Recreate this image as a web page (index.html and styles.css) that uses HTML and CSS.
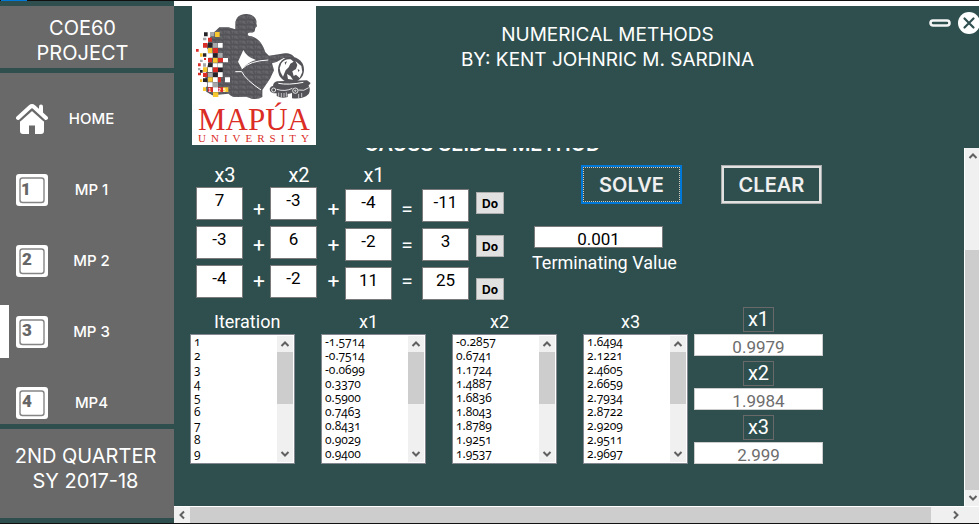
FILE: index.html
```html
<!DOCTYPE html>
<html lang="en">
<head>
<meta charset="utf-8">
<title>Numerical Methods</title>
<link rel="stylesheet" href="styles.css">
</head>
<body>
<div class="topline"><span class="topline-mark"></span></div>
<div class="app">
  <aside class="sidebar">
    <h1 class="panel brand">COE60<br>PROJECT</h1>
    <nav class="panel menu">
      <a class="item" href="#home">
        <svg class="icon" viewBox="0 0 32 32"><path d="M4 18 16 6.500 28 18V28a3 3 0 0 1-3 3H19V22.500H13V31H7a3 3 0 0 1-3-3Z" fill="#fff"/><path d="M2 16 16 3.500 30 16" fill="none" stroke="#696969" stroke-width="7"/><path d="M2 15 14 4Q16 2.300 18 4L30 15" fill="none" stroke="#fff" stroke-width="4" stroke-linecap="round"/><path d="M23 3.500a1.500 1.500 0 0 1 4 0V11L23 8Z" fill="#fff"/></svg>
        <span class="item-text">HOME</span>
      </a>
      <a class="item" href="#mp1">
        <svg class="icon" viewBox="0 0 32 32"><rect width="32" height="32" rx="3" fill="#fff"/><rect x="4" y="4" width="24" height="24.500" rx="2.500" fill="none" stroke="#858585" stroke-width="1.400"/><text class="key" x="10" y="21">1</text></svg>
        <span class="item-text">MP 1</span>
      </a>
      <a class="item" href="#mp2">
        <svg class="icon" viewBox="0 0 32 32"><rect width="32" height="32" rx="3" fill="#fff"/><rect x="4" y="4" width="24" height="24.500" rx="2.500" fill="none" stroke="#858585" stroke-width="1.400"/><text class="key" x="11" y="20">2</text></svg>
        <span class="item-text">MP 2</span>
      </a>
      <a class="item active" href="#mp3">
        <svg class="icon" viewBox="0 0 32 32"><rect width="32" height="32" rx="3" fill="#fff"/><rect x="4" y="4" width="24" height="24.500" rx="2.500" fill="none" stroke="#858585" stroke-width="1.400"/><text class="key" x="11" y="20">3</text></svg>
        <span class="item-text">MP 3</span>
      </a>
      <a class="item" href="#mp4">
        <svg class="icon" viewBox="0 0 32 32"><rect width="32" height="32" rx="3" fill="#fff"/><rect x="4" y="4" width="24" height="24.500" rx="2.500" fill="none" stroke="#858585" stroke-width="1.400"/><text class="key" x="11" y="20">4</text></svg>
        <span class="item-text">MP4</span>
      </a>
    </nav>
    <p class="panel term">2ND QUARTER<br>SY 2017-18</p>
  </aside>

  <main class="main">
    <header class="header">
      <svg class="logo" viewBox="21 18 372 417" role="img" aria-label="Mapúa University">
        <defs>
          <pattern id="glyphs" width="23" height="15" patternUnits="userSpaceOnUse"><path d="M1 3H8M4 3V11M11 11V3H16V11M19 3V11H22M12 7H15" stroke="#77777c" stroke-width="1.500" fill="none"/></pattern>
          <path id="body" d="M151 72C151 51 166 41 185 42C205 43 217 56 214 70L216 79L211 83L209 94C204 100 196 96 190 99C187 102 188 106 193 108C216 111 232 128 241 157L252 167L300 160C315 160 326 166 328 173L320 178L296 174L276 185L261 190L267 211L255 236L232 270V291Q219 299 200 296L184 290L156 291Q140 292 131 281L82 286L64 275L61 228L72 180L65 137L78 106L103 82L130 82L151 88Z"/>
        </defs>
        <rect x="21" y="18" width="372" height="417" fill="#fff"/>
        <use href="#body" fill="#535358"/>
        <use href="#body" fill="url(#glyphs)"/>
        <path d="M175 150Q185 172 214 180Q190 186 171 207L159 185Z" fill="#fff"/>
        <path d="M151 215H170Q183 240 228 270M170 207Q195 182 250 180" fill="none" stroke="#fff" stroke-width="3"/>
        <path d="M21 75H76V108H51V290H21Z" fill="#fff"/>
        <g fill="#db2c25"><path d="M69 113h12v12H69zM54 129h13v14H54zM84 144h15v15H84zM33 147h8v8h-8zM69 174h12v13H69zM99 174h15v13H99zM39 190h8v9h-8zM84 202h15v15H84zM54 218h13v13H54zM39 218h9v8h-9zM69 262h15v14H69zM99 232h9v15H99zM99 262h15v14H99zM57 174h6v6h-6z"/></g>
        <g fill="#f6c72f"><path d="M90 96h14v15H90zM69 144h13v15H69zM54 202h13v14H54zM84 174h14v14H84zM45 160h8v10h-8zM69 232h14v13H69zM84 277h16v14H84zM54 262h9v11h-9zM114 262h16v14H114zM45 238h7v8h-7z"/></g>
        <g fill="#a7a8aa"><path d="M75 96h13v13H75zM84 129h14v14H84zM54 113h10v8H54zM54 190h9v10H54zM99 159h14v14H99zM69 218h14v13H69zM45 179h8v7h-8zM84 247h15v14H84zM39 204h7v7h-7z"/></g>
        <g fill="#fff"><path d="M69 160h14v13H69zM99 129h14v14H99zM84 190h14v12H84zM114 174h15v13h-15zM54 146h14v13H54zM69 202h13v14H69zM99 190h14v12H99zM84 232h14v14H84zM120 232h15v15h-15zM69 247h14v14H69zM54 247h13v13H54zM99 217h14v14H99zM84 262h15v14H84z"/></g>
        <g fill="#262328"><path d="M57 97h11v12H57zM69 129h12v13H69zM54 160h10v10H54zM84 160h13v12H84zM69 190h12v11H69zM99 204h14v12H99zM45 210h8v8h-8zM84 218h14v13H84zM54 235h12v11H54z"/></g>
        <text class="year" x="100" y="275">1925</text>
        <circle cx="318" cy="209" r="39" fill="#535358"/>
        <path d="M289 190Q300 175 317 178L326 185L316 191L311 202L302 211L294 230Q284 217 284 205ZM331 183L349 198L352 216L344 234L333 224L326 228L322 214L333 207L337 195ZM306 222L316 228L324 239L309 237Z" fill="#fff"/>
        <path d="M299 187L306 184L301 195ZM338 207L344 211L340 216Z" fill="#535358"/>
        <path d="M276 244L366 241L377 249L370 258H264Q264 248 276 244Z" fill="#535358"/>
        <path d="M280 250Q310 256 355 247" fill="none" stroke="#fff" stroke-width="3"/>
        <path d="M263 258H371Q378 267 371 282L363 289Q347 298 321 295V279Q308 285 276 280Q253 280 254 266Q257 259 263 258Z" fill="#535358"/>
        <path d="M275 275V288Q290 297 308 291V277Z" fill="#535358"/>
        <path d="M281 278V290M289 279V292M297 279V291M304 277V290M341 282V294M350 279V292" stroke="#fff" stroke-width="2"/>
        <g fill="none" stroke="#fff" stroke-width="2.500"><circle cx="266" cy="270" r="6"/><circle cx="331" cy="272" r="8"/><circle cx="331" cy="272" r="2"/><path d="M275 268Q301 276 322 265M340 270Q357 275 371 263"/></g>
        <text class="logo-name" x="207" y="391">MAPÚA</text>
        <text class="logo-sub" x="213" y="426">UNIVERSITY</text>
      </svg>
      <h2 class="title">NUMERICAL METHODS<br>BY: KENT JOHNRIC M. SARDINA</h2>
      <div class="window-buttons">
        <button class="window-button" type="button" aria-label="Minimize"><svg viewBox="0 0 22 22"><rect x="1.500" y="8.500" width="19" height="5" rx="2.500" fill="none" stroke="#f4f4f4" stroke-width="2.600"/></svg></button>
        <button class="window-button" type="button" aria-label="Close"><svg viewBox="0 0 22 22"><circle cx="11" cy="11" r="11" fill="#fff"/><path d="M6.500 6.500 15.500 15.500M15.500 6.500 6.500 15.500" stroke="#2f4f4f" stroke-width="2.200" stroke-linecap="round"/></svg></button>
      </div>
    </header>

    <div class="viewport">
      <section class="content">
        <h3 class="method">GAUSS SEIDEL METHOD</h3>
        <div class="top-row">
          <div class="equations">
            <div class="terms"><span class="var">x3</span><input aria-label="x3, row 1" value="7"><input aria-label="x3, row 2" value="-3"><input aria-label="x3, row 3" value="-4"></div>
            <div class="ops"><span>+</span><span>+</span><span>+</span></div>
            <div class="terms"><span class="var">x2</span><input aria-label="x2, row 1" value="-3"><input aria-label="x2, row 2" value="6"><input aria-label="x2, row 3" value="-2"></div>
            <div class="ops second"><span>+</span><span>+</span><span>+</span></div>
            <div class="terms low"><span class="var">x1</span><input aria-label="x1, row 1" value="-4"><input aria-label="x1, row 2" value="-2"><input aria-label="x1, row 3" value="11"></div>
            <div class="ops equals"><span>=</span><span>=</span><span>=</span></div>
            <div class="terms low"><span class="var"></span><input aria-label="Result, row 1" value="-11"><input aria-label="Result, row 2" value="3"><input aria-label="Result, row 3" value="25"></div>
            <div class="dos"><button type="button">Do</button><button type="button">Do</button><button type="button">Do</button></div>
          </div>
          <div class="controls">
            <div class="actions"><button class="action solve" type="button">SOLVE</button><button class="action" type="button">CLEAR</button></div>
            <input class="field" id="terminating" value="0.001">
            <label class="caption" for="terminating">Terminating Value</label>
          </div>
        </div>

        <div class="bottom-row">
          <div class="series">
            <label class="caption wide" for="iteration">Iteration</label>
            <div class="listbox"><select id="iteration" size="9"><option>1</option><option>2</option><option>3</option><option>4</option><option>5</option><option>6</option><option>7</option><option>8</option><option>9</option></select>
              <div class="bar"><svg viewBox="0 0 16 16"><path d="M4.500 10 8 6.500 11.500 10"/></svg><i></i><svg viewBox="0 0 16 16"><path d="M4.500 6 8 9.500 11.500 6"/></svg></div></div>
          </div>
          <div class="series">
            <label class="caption" for="s1">x1</label>
            <div class="listbox"><select id="s1" size="9"><option>-1.5714</option><option>-0.7514</option><option>-0.0699</option><option>0.3370</option><option>0.5900</option><option>0.7463</option><option>0.8431</option><option>0.9029</option><option>0.9400</option></select>
              <div class="bar"><svg viewBox="0 0 16 16"><path d="M4.500 10 8 6.500 11.500 10"/></svg><i></i><svg viewBox="0 0 16 16"><path d="M4.500 6 8 9.500 11.500 6"/></svg></div></div>
          </div>
          <div class="series">
            <label class="caption" for="s2">x2</label>
            <div class="listbox"><select id="s2" size="9"><option>-0.2857</option><option>0.6741</option><option>1.1724</option><option>1.4887</option><option>1.6836</option><option>1.8043</option><option>1.8789</option><option>1.9251</option><option>1.9537</option></select>
              <div class="bar"><svg viewBox="0 0 16 16"><path d="M4.500 10 8 6.500 11.500 10"/></svg><i></i><svg viewBox="0 0 16 16"><path d="M4.500 6 8 9.500 11.500 6"/></svg></div></div>
          </div>
          <div class="series">
            <label class="caption" for="s3">x3</label>
            <div class="listbox"><select id="s3" size="9"><option>1.6494</option><option>2.1221</option><option>2.4605</option><option>2.6659</option><option>2.7934</option><option>2.8722</option><option>2.9209</option><option>2.9511</option><option>2.9697</option></select>
              <div class="bar"><svg viewBox="0 0 16 16"><path d="M4.500 10 8 6.500 11.500 10"/></svg><i></i><svg viewBox="0 0 16 16"><path d="M4.500 6 8 9.500 11.500 6"/></svg></div></div>
          </div>
          <div class="results">
            <div class="result"><label class="tag" for="r1">x1</label><input class="field" id="r1" value="0.9979" disabled></div>
            <div class="result"><label class="tag" for="r2">x2</label><input class="field" id="r2" value="1.9984" disabled></div>
            <div class="result"><label class="tag" for="r3">x3</label><input class="field" id="r3" value="2.999" disabled></div>
          </div>
        </div>
      </section>
      <div class="scroll-y"><svg viewBox="0 0 16 16"><path d="M4.500 10 8 6.500 11.500 10"/></svg><i></i><svg viewBox="0 0 16 16"><path d="M4.500 6 8 9.500 11.500 6"/></svg></div>
      <div class="scroll-x"><svg viewBox="0 0 16 16"><path d="M10 4.500 6.500 8 10 11.500"/></svg><i></i><svg viewBox="0 0 16 16"><path d="M6 4.500 9.500 8 6 11.500"/></svg></div>
    </div>
  </main>
</div>
</body>
</html>
```
FILE: styles.css
```css
* { box-sizing: border-box; }

body {
  margin: 0;
  height: 100vh;
  display: flex;
  flex-direction: column;
  overflow: hidden;
  background: #2f4f4f;
  border-bottom: 1px solid #111;
  color: #fff;
  font-family: Inter, "Liberation Sans", sans-serif;
}

h1, h2, h3, p { margin: 0; font-weight: 400; }
button, input, select { margin: 0; font-family: inherit; border-radius: 0; }

.topline { flex: none; height: 1px; background: #111; }
.topline-mark { display: block; width: 26px; height: 1px; margin-left: 1px; background: #0078d7; }

.app { flex: 1; min-height: 0; display: grid; grid-template-columns: 174px minmax(0, 1fr); }

/* Sidebar */
.sidebar { display: flex; flex-direction: column; gap: 5px; padding: 5px 0; min-height: 0; }
.panel { background: #696969; }
.brand, .term { flex: none; font-size: 20px; line-height: 25px; text-align: center; }
.brand { height: 62px; padding: 10px 9px 0 0; }
.term { height: 89px; padding: 15px 3px 0 0; }
.menu { flex: 1; min-height: 0; overflow: hidden; padding-top: 10px; }
.item { display: flex; align-items: center; height: 71px; padding-left: 16px; color: #fff; font-size: 15px; font-weight: 500; text-decoration: none; }
.item.active { padding-left: 0; }
.item.active::before { content: ""; width: 9px; height: 53px; margin-right: 7px; background: #fff; }
.icon { flex: none; width: 32px; height: 32px; }
.item-text { width: 87px; text-align: center; }
.key { font: 900 17px Roboto, sans-serif; fill: #666; text-anchor: middle; }

/* Header */
.main { display: flex; flex-direction: column; min-height: 0; border-top: 5px solid #fff; }
.header { flex: none; height: 142px; display: grid; grid-template-columns: 124px 1fr 50px; padding-left: 18px; }
.logo { width: 124px; height: 139px; }
.logo-name { font: 93px "Liberation Serif", serif; fill: #db2c25; text-anchor: middle; }
.logo-sub { font: 33px "Liberation Serif", serif; fill: #db2c25; text-anchor: middle; letter-spacing: 15px; }
.year { font: 700 14px "Liberation Sans", sans-serif; fill: #fff; text-anchor: middle; letter-spacing: 7px; }
.title { padding: 16px 30px 0 0; font-size: 19px; line-height: 25px; text-align: center; }
.window-buttons { display: flex; gap: 7px; padding-top: 6px; }
.window-button { flex: none; width: 22px; height: 22px; padding: 0; border: 0; background: none; }
.window-button svg { display: block; }

/* Scrolled area */
.viewport { flex: 1; min-height: 0; display: grid; grid-template: minmax(0, 1fr) 17px / minmax(0, 1fr) 15px; }
.content { overflow: hidden; }
.method { margin: -16px 0 7px 190px; font-size: 20px; font-weight: 600; line-height: 24px; }
.top-row { display: flex; padding-left: 22px; }
.equations { display: flex; font-family: Roboto, sans-serif; }
.terms { width: 47px; display: flex; flex-direction: column; gap: 6px; }
.terms input { height: 33px; width: 47px; padding: 0 0 7px; border: 1px solid #7a7a7a; background: #fff; color: #000; font-size: 17px; text-align: center; }
.var { height: 24px; margin-bottom: -6px; padding-left: 11px; text-align: center; font-size: 20px; line-height: 24px; }
.low .var { margin-bottom: -4px; }
.ops { width: 27px; display: flex; flex-direction: column; padding: 28px 0 0 5px; font-size: 21px; line-height: 36px; text-align: center; }
.second { width: 28px; }
.equals { width: 30px; padding-left: 0; }
.dos { display: flex; flex-direction: column; gap: 21px; padding: 29px 0 0 7px; }
.dos button { width: 28px; height: 22px; padding: 0; border: 1px solid #adadad; background: #e1e1e1; color: #000; font: 700 12px Inter, sans-serif; }

.controls { margin: 2px 0 0 28px; display: flex; flex-direction: column; }
.actions { display: flex; gap: 39px; padding-left: 49px; margin-bottom: 22px; }
.action { width: 101px; height: 39px; padding: 0; border: 1px solid #adadad; box-shadow: inset 0 0 0 2px #e1e1e1; background: transparent; color: #f0f0f0; font-size: 20px; font-weight: 600; }
.solve { border: 2px solid #0078d7; box-shadow: none; outline: 1px dotted #d5c9bb; outline-offset: -3px; }
.field { width: 129px; height: 22px; margin-left: 2px; padding: 3px 0 0; border: 1px solid #7a7a7a; background: #fff; color: #000; font-family: Roboto, sans-serif; font-size: 17px; text-align: center; }
.caption { height: 24px; font-family: Roboto, sans-serif; font-size: 18px; line-height: 24px; }
.controls .caption { margin-top: 3px; }

.bottom-row { display: flex; margin-top: 7px; padding-left: 16px; }
.series { width: 105px; margin-right: 26px; padding-top: 3px; display: flex; flex-direction: column; }
.series:nth-child(4) { margin-right: 6px; }
.series .caption { padding-left: 38px; }
.series .wide { padding-left: 24px; }
.listbox { display: flex; height: 130px; padding: 1px 1px 1px 0; border: 1px solid #828790; background: #fff; overflow: hidden; }
.listbox select { flex: 1; min-width: 0; height: 130px; margin-top: -3px; padding: 0; border: 0; appearance: none; overflow: hidden; background: transparent; color: #000; font-family: "Open Sans", sans-serif; font-size: 12px; font-feature-settings: "onum"; }
.listbox option { height: 14px; min-height: 14px; padding: 0 3px; line-height: 14px; }
.bar { width: 16px; display: flex; flex-direction: column; justify-content: space-between; background: #f0f0f0; }
.bar i { height: 52px; margin-bottom: auto; background: #cdcdcd; }
.bar svg, .scroll-y svg, .scroll-x svg { flex: none; width: 16px; height: 16px; fill: none; stroke: #606060; stroke-width: 2; }

.results { display: flex; flex-direction: column; gap: 5px; }
.result { display: flex; flex-direction: column; align-items: center; gap: 2px; }
.result .field { margin: 0; border-color: #ccc; color: #6d6d6d; }
.tag { height: 25px; padding: 0 4px; border: 1px solid #696969; font-family: Roboto, sans-serif; font-size: 20px; line-height: 23px; }

.scroll-y { display: flex; flex-direction: column; border-left: 1px solid #fff; background: #f0f0f0; }
.scroll-y i { height: 67%; margin-top: auto; background: #cdcdcd; }
.scroll-x { grid-column: 1 / -1; display: flex; align-items: stretch; border-top: 1px solid #fff; background: #f0f0f0; }
.scroll-x i { width: 92%; margin-right: auto; background: #cdcdcd; }
.scroll-x svg:last-child { margin-right: 15px; }
```
